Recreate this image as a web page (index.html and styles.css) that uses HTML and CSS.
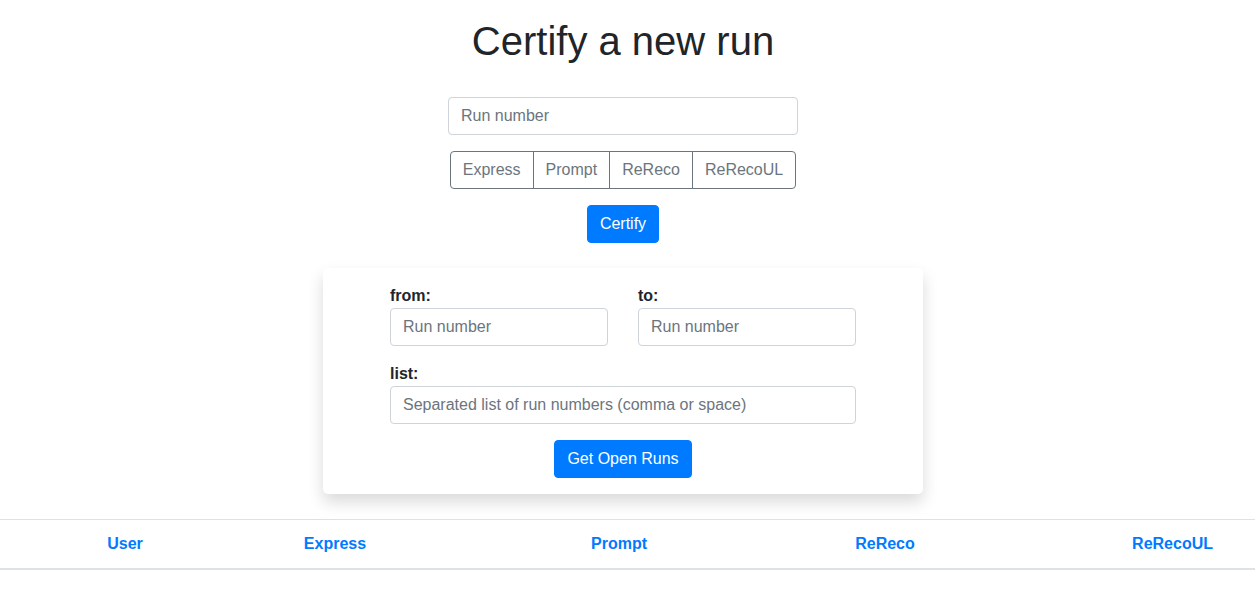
FILE: index.html
```html
<!DOCTYPE html>
<html>
<head>
<meta charset="utf-8">
<link rel="stylesheet" href="styles.css">
</head>
<body>
<div class="top">
  <h1 class="title">Certify a new run</h1>
  <div class="certify-form">
    <input class="form-control run-input" type="text" placeholder="Run number">
    <div class="btn-group">
      <button class="btn-outline">Express</button>
      <button class="btn-outline">Prompt</button>
      <button class="btn-outline">ReReco</button>
      <button class="btn-outline">ReRecoUL</button>
    </div>
    <button class="btn-primary">Certify</button>
  </div>
  <div class="card">
    <div class="card-inner">
      <div class="range">
        <div class="field">
          <label class="label">from:</label>
          <input class="form-control" type="text" placeholder="Run number">
        </div>
        <div class="field">
          <label class="label">to:</label>
          <input class="form-control" type="text" placeholder="Run number">
        </div>
      </div>
      <div class="field list-field">
        <label class="label">list:</label>
        <input class="form-control" type="text" placeholder="Separated list of run numbers (comma or space)">
      </div>
      <div class="actions">
        <button class="btn-primary">Get Open Runs</button>
      </div>
    </div>
  </div>
</div>
<div class="table-head">
  <div class="th">User</div>
  <div class="th">Express</div>
  <div class="th">Prompt</div>
  <div class="th">ReReco</div>
  <div class="th th-last">ReRecoUL</div>
</div>
</body>
</html>
```
FILE: styles.css
```css
* { box-sizing: border-box; }
body {
  margin: 0;
  font-family: "Liberation Sans", Arial, sans-serif;
  font-size: 16px;
  line-height: 1.5;
  color: #212529;
  background: #fff;
}
.top {
  padding-right: 9px;
  display: flex;
  flex-direction: column;
  align-items: center;
}
.title {
  margin: 17px 0 32px;
  font-size: 40px;
  font-weight: 500;
  line-height: 1.2;
  text-align: center;
}
.certify-form {
  display: flex;
  flex-direction: column;
  align-items: center;
}
.form-control {
  display: block;
  width: 100%;
  height: 38px;
  padding: 6px 12px;
  font-family: inherit;
  font-size: 16px;
  line-height: 1.5;
  color: #495057;
  background: #fff;
  border: 1px solid #ced4da;
  border-radius: 4px;
  outline: none;
}
.form-control::placeholder { color: #6c757d; opacity: 1; }
.run-input { width: 350px; }
.btn-group {
  display: flex;
  margin-top: 16px;
}
.btn-outline {
  height: 38px;
  padding: 6px 12px;
  font-family: inherit;
  font-size: 16px;
  line-height: 1.5;
  color: #6c757d;
  background: #fff;
  border: 1px solid #6c757d;
  border-radius: 0;
  margin-left: -1px;
}
.btn-outline:first-child { border-radius: 4px 0 0 4px; margin-left: 0; }
.btn-outline:last-child { border-radius: 0 4px 4px 0; }
.btn-primary {
  height: 38px;
  padding: 6px 12px;
  font-family: inherit;
  font-size: 16px;
  line-height: 1.5;
  color: #fff;
  background: #007bff;
  border: 1px solid #007bff;
  border-radius: 4px;
}
.certify-form .btn-primary { margin-top: 16px; }
.card {
  margin-top: 25px;
  width: 600px;
  background: #fff;
  border-radius: 5px;
  box-shadow: 0 8px 16px rgba(0,0,0,0.15);
  padding: 16px 0;
  display: flex;
  justify-content: center;
}
.card-inner { width: 466px; }
.range {
  display: grid;
  grid-template-columns: 218px 218px;
  column-gap: 30px;
}
.label {
  display: block;
  font-weight: 700;
  line-height: 24px;
}
.list-field { margin-top: 16px; }
.actions {
  margin-top: 16px;
  display: flex;
  justify-content: center;
}
.table-head {
  margin-top: 25px;
  display: grid;
  grid-template-columns: 250px 170px 398px 134px 1fr;
  border-top: 1px solid #dee2e6;
  border-bottom: 2px solid #dee2e6;
}
.th {
  padding: 12px 0;
  line-height: 24px;
  font-weight: 700;
  color: #007bff;
  text-align: center;
}
.th-last {
  text-align: right;
  padding-right: 42px;
}
```
